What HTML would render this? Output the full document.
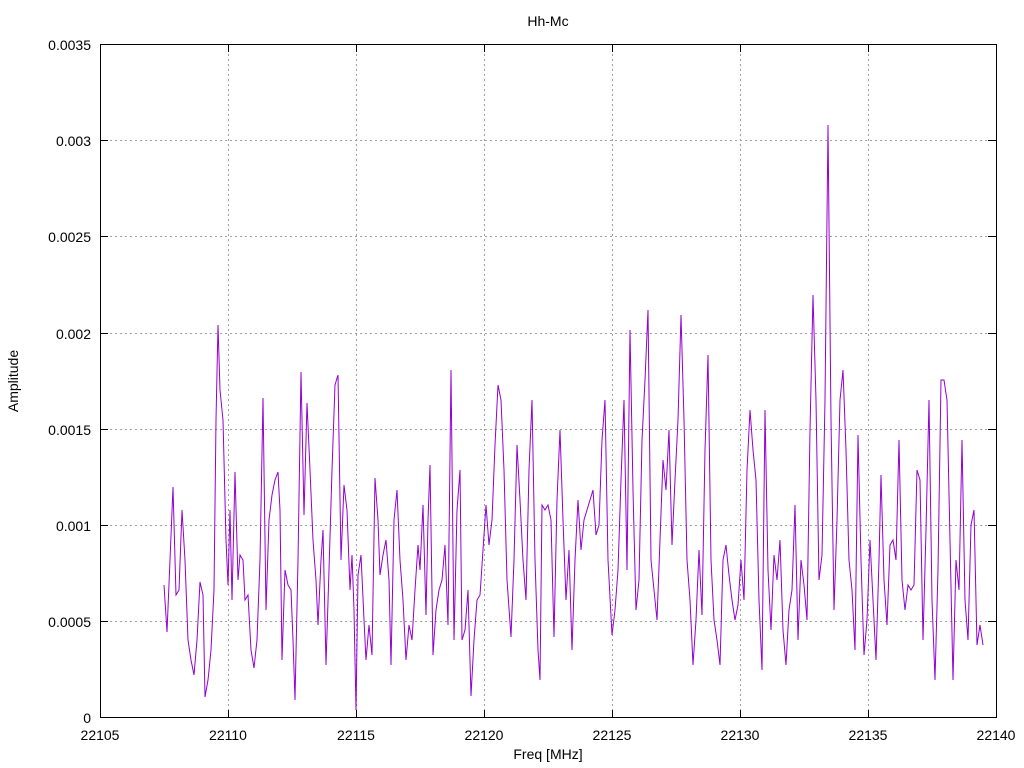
<!DOCTYPE html>
<html><head><meta charset="utf-8"><style>
html,body{margin:0;padding:0;background:#fff;}
svg{display:block;font-family:"Liberation Sans",sans-serif;font-size:14px;}
</style></head><body>
<svg width="1024" height="768" viewBox="0 0 1024 768">
<rect width="1024" height="768" fill="#fff"/>
<g stroke="#a0a0a0" stroke-width="1" stroke-dasharray="2,3">
<line x1="100" y1="621.5" x2="996" y2="621.5"/>
<line x1="100" y1="525.5" x2="996" y2="525.5"/>
<line x1="100" y1="429.5" x2="996" y2="429.5"/>
<line x1="100" y1="333.5" x2="996" y2="333.5"/>
<line x1="100" y1="236.5" x2="996" y2="236.5"/>
<line x1="100" y1="140.5" x2="996" y2="140.5"/>
<line x1="228.5" y1="44" x2="228.5" y2="718"/>
<line x1="356.5" y1="44" x2="356.5" y2="718"/>
<line x1="484.5" y1="44" x2="484.5" y2="718"/>
<line x1="612.5" y1="44" x2="612.5" y2="718"/>
<line x1="740.5" y1="44" x2="740.5" y2="718"/>
<line x1="868.5" y1="44" x2="868.5" y2="718"/>
</g>
<g stroke="#000" stroke-width="1">
<path d="M100.5,718v-8M228.5,718v-8M356.5,718v-8M484.5,718v-8M612.5,718v-8M740.5,718v-8M868.5,718v-8M996.5,718v-8
M100.5,44v8M228.5,44v8M356.5,44v8M484.5,44v8M612.5,44v8M740.5,44v8M868.5,44v8M996.5,44v8
M100,717.5h8M100,621.5h8M100,525.5h8M100,429.5h8M100,333.5h8M100,236.5h8M100,140.5h8M100,44.5h8
M996,717.5h-8M996,621.5h-8M996,525.5h-8M996,429.5h-8M996,333.5h-8M996,236.5h-8M996,140.5h-8M996,44.5h-8"/>
</g>
<polyline fill="none" stroke="#9400d3" stroke-width="1" points="164,585 167,632 170,560 173,487 176,595 179,590 182,510 185,560 188,640 191,660 194,675 197,640 200,582 203,595 205,697 208,680 211,650 214,590 216,420 218,325 220,390 223,420 226,540 228,585 230,510 232,600 235,472 238,580 240,555 243,560 245,600 248,595 251,650 254,668 257,640 260,560 263,398 266,610 269,520 272,495 275,480 278,472 280,510 282,660 285,570 288,585 291,590 293,640 295,700 298,560 301,372 304,515 307,403 310,470 313,540 316,580 318,625 321,560 323,530 326,665 329,570 332,470 335,385 338,375 341,560 344,485 347,510 350,590 352,555 354,610 356,710 358,575 361,555 364,620 366,660 369,625 372,655 375,478 378,520 380,575 383,555 386,540 389,580 391,665 394,520 397,490 400,560 403,600 406,660 409,625 412,640 415,590 418,545 420,570 423,505 426,615 428,520 430,465 433,655 436,610 439,590 442,580 445,545 448,625 451,370 454,640 457,510 460,470 462,640 465,630 468,590 471,696 474,640 477,600 480,595 483,550 486,505 489,545 492,520 495,445 498,385 501,400 504,470 507,580 511,637 514,560 517,445 520,500 523,560 526,600 529,470 532,400 535,560 538,650 540,680 542,505 545,510 548,505 551,520 554,637 557,500 560,430 563,520 566,600 569,550 572,650 575,560 578,500 581,550 584,520 587,510 590,500 593,490 596,535 599,525 602,440 605,400 608,560 612,635 615,610 618,570 621,480 624,400 627,570 630,330 633,490 636,610 639,580 642,440 645,380 648,310 651,560 654,590 657,620 660,540 663,460 666,490 669,430 672,545 675,480 678,420 681,315 684,420 687,560 690,600 693,665 696,620 699,550 702,615 705,450 708,355 711,560 714,620 717,640 720,665 723,560 726,545 729,575 732,600 735,620 738,605 741,560 744,600 747,470 750,410 753,450 756,480 759,600 762,670 765,410 768,570 771,630 774,555 777,580 780,540 783,630 786,665 789,610 792,590 795,505 798,640 801,560 804,585 807,620 810,430 813,295 816,400 819,580 822,555 825,400 828,125 831,420 834,610 837,520 840,400 843,370 846,450 849,560 852,590 855,650 858,435 861,560 864,655 867,620 870,540 873,600 876,660 879,560 881,475 884,580 887,625 890,545 893,540 896,560 899,440 902,580 905,610 908,585 911,590 914,585 917,470 920,480 923,640 926,530 929,400 932,600 935,680 938,570 941,380 944,380 947,400 950,540 953,680 956,560 959,590 962,440 965,600 968,640 971,525 974,510 977,645 980,625 983,645"/>
<rect x="100.5" y="44.5" width="896" height="673" fill="none" stroke="#000" stroke-width="1"/>
<g fill="#000" text-anchor="end">
<text x="91" y="723">0</text>
<text x="91" y="627">0.0005</text>
<text x="91" y="531">0.001</text>
<text x="91" y="435">0.0015</text>
<text x="91" y="339">0.002</text>
<text x="91" y="242">0.0025</text>
<text x="91" y="146">0.003</text>
<text x="91" y="50">0.0035</text>
</g>
<g fill="#000" text-anchor="middle">
<text x="100" y="740">22105</text>
<text x="228" y="740">22110</text>
<text x="356" y="740">22115</text>
<text x="484" y="740">22120</text>
<text x="612" y="740">22125</text>
<text x="740" y="740">22130</text>
<text x="868" y="740">22135</text>
<text x="996" y="740">22140</text>
<text x="548" y="759">Freq [MHz]</text>
<text x="548" y="26">Hh-Mc</text>
<text transform="translate(18,381) rotate(-90)">Amplitude</text>
</g>
</svg>
</body></html>
